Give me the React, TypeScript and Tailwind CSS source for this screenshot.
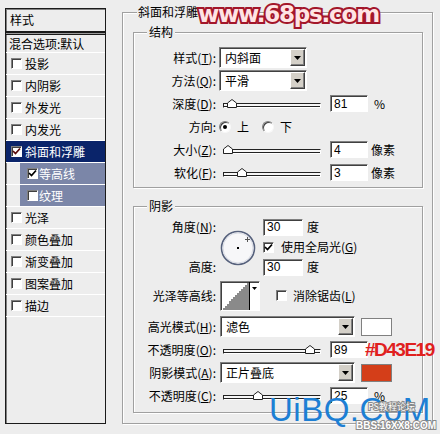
import React from "react";

const sunken =
  "border border-t-[#808080] border-l-[#808080] border-b-white border-r-white shadow-[inset_1px_1px_0_#404040]";
const etched = "border border-[#a0a0a0] shadow-[inset_1px_1px_0_#ffffff,1px_1px_0_#ffffff]";

function U({ c }: { c: string }) {
  return <span className="underline underline-offset-[1px]">{c}</span>;
}

function Label({ t, k }: { t: string; k?: string }) {
  return (
    <div className="w-[82px] shrink-0 text-right whitespace-nowrap">
      {t}
      {k ? (
        <>
          (<U c={k} />)
        </>
      ) : null}
      :
    </div>
  );
}

function CheckBox({ checked, color = "#000" }: { checked?: boolean; color?: string }) {
  return (
    <span className={`relative inline-block w-[11px] h-[11px] shrink-0 bg-white ${sunken}`}>
      {checked && (
        <svg className="absolute left-0 top-0" width="9" height="9" viewBox="0 0 9 9">
          <path d="M1 4 L3.5 6.5 L8 1.5" stroke={color} strokeWidth="1.7" fill="none" />
        </svg>
      )}
    </span>
  );
}

function Radio({ on }: { on?: boolean }) {
  return (
    <span className="w-[12px] h-[12px] shrink-0 rounded-full bg-white border border-t-[#808080] border-l-[#808080] border-b-[#f8f8f8] border-r-[#f8f8f8] shadow-[inset_1px_1px_0_#404040] flex items-center justify-center">
      {on && <span className="w-[4px] h-[4px] rounded-full bg-black" />}
    </span>
  );
}

function Slider({ pos }: { pos: number }) {
  return (
    <div className="relative ml-[4px] w-[98px] h-[9px] flex items-end shrink-0">
      <div className="w-full h-[5px] border border-[#222] border-b-[#ffffff] border-r-[#ffffff] bg-[#f6f6f6] shadow-[inset_0_-1px_0_#222]" />
      <svg className="absolute top-0" style={{ left: pos }} width="10" height="9" viewBox="0 0 10 9">
        <path d="M0.5 8.5 V4 L5 0.5 L9.5 4 V8.5 Z" fill="#ffffff" stroke="#222" />
      </svg>
    </div>
  );
}

function Field({ v, cls }: { v: string; cls: string }) {
  return (
    <div className={`${cls} h-[17px] shrink-0 bg-white ${sunken} pl-[3px] flex items-center font-['Liberation_Sans',sans-serif]`}>
      {v}
    </div>
  );
}

function Select({ v, w }: { v: string; w: string }) {
  return (
    <div className={`${w} h-[21px] shrink-0 bg-white ${sunken} flex items-center justify-between`}>
      <span className="pl-[5px]">{v}</span>
      <span className="w-[15px] h-[17px] mr-[1px] bg-[#d4d0c8] border border-t-white border-l-white border-b-[#404040] border-r-[#404040] shadow-[inset_-1px_-1px_0_#808080] flex items-center justify-center">
        <svg width="7" height="4" viewBox="0 0 7 4">
          <path d="M0 0H7L3.5 4Z" fill="#000" />
        </svg>
      </span>
    </div>
  );
}

function Row({ label, k, children, cls = "" }: { label: string; k?: string; children: React.ReactNode; cls?: string }) {
  return (
    <div className={`flex items-center h-[23px] ${cls}`}>
      <Label t={label} k={k} />
      <div className="ml-[3px] flex items-center">{children}</div>
    </div>
  );
}

type Item = { t: string; checked?: boolean; sel?: boolean; sub?: boolean };
const items: Item[] = [
  { t: "投影" },
  { t: "内阴影" },
  { t: "外发光" },
  { t: "内发光" },
  { t: "斜面和浮雕", checked: true, sel: true },
  { t: "等高线", checked: true, sub: true },
  { t: "纹理", sub: true },
  { t: "光泽" },
  { t: "颜色叠加" },
  { t: "渐变叠加" },
  { t: "图案叠加" },
  { t: "描边" },
];

function Dial() {
  return (
    <svg className="ml-[4px] mt-[12px] shrink-0" width="36" height="36" viewBox="0 0 36 36">
      <circle cx="18" cy="18" r="16.5" fill="#f7f7f9" stroke="#56617c" strokeWidth="1.6" />
      <circle cx="18" cy="18" r="15" fill="none" stroke="#d8dbe4" strokeWidth="1" />
      <rect x="17" y="17" width="2" height="2" fill="#000" />
      <path d="M27.5 7 V12 M25 9.5 H30" stroke="#555" strokeWidth="1" />
    </svg>
  );
}

function Contour() {
  return (
    <div className={`ml-[4px] w-[40px] h-[30px] shrink-0 bg-white ${sunken} flex`}>
      <svg width="28" height="28" viewBox="0 0 28 28" className="shrink-0">
        <path
          d="M2 28 V26 H4 V24 H6 V22 H8 V19 H10 V17 H12 V15 H14 V13 H16 V11 H18 V9 H20 V7 H22 V5 H24 V3 H26 V1 H28 V28 Z"
          fill="#8a8a8a"
        />
      </svg>
      <div className="w-[1px] h-full bg-black" />
      <div className="flex-1 flex items-start justify-center pt-[5px]">
        <svg width="5" height="3" viewBox="0 0 5 3">
          <path d="M0 0H5L2.5 3Z" fill="#000" />
        </svg>
      </div>
    </div>
  );
}

export default function App() {
  return (
    <div className="relative w-[440px] h-[434px] overflow-hidden bg-[#ededed] text-black text-[12px] leading-[14px] font-['Noto_Sans_CJK_SC','Noto_Sans',sans-serif] flex items-start">
      {/* left list panel */}
      <div className="ml-[5px] mt-[8px] w-[101px] h-[416px] shrink-0 border border-[#1a1a1a] shadow-[inset_1px_1px_0_#808080] flex flex-col">
        <div className="h-[22px] pl-[4px] flex items-center">样式</div>
        <div className="h-[4px] border-t-2 border-b border-[#1a1a1a] bg-[#9a9a9a]" />
        <div className="h-[18px] pl-[3px] flex items-center border-b border-white">混合选项:默认</div>
        {items.map((it) =>
          it.sub ? (
            <div key={it.t} className="h-[22px] border-b border-white flex">
              <div className="ml-[14px] flex-1 bg-[#7b86a8] text-white flex items-center pl-[7px] gap-[1px]">
                <CheckBox checked={it.checked} />
                <span>{it.t}</span>
              </div>
            </div>
          ) : (
            <div
              key={it.t}
              className={`h-[22px] border-b border-white flex items-center pl-[5px] gap-[3px] ${it.sel ? "bg-[#0a246a] text-white" : ""}`}
            >
              <CheckBox checked={it.checked} color="#5a0a0a" />
              <span>{it.t}</span>
            </div>
          )
        )}
      </div>

      {/* right group */}
      <div className={`relative ml-[16px] mt-[12px] w-[311px] h-[412px] shrink-0 ${etched} pt-[19px] pl-[10px] pr-[9px] flex flex-col`}>
        <span className="absolute left-[14px] top-[-8px] px-[1px] bg-[#ededed]">斜面和浮雕</span>

        {/* 结构 */}
        <div className={`relative h-[156px] ${etched} pt-[13px] flex flex-col`}>
          <span className="absolute left-[13px] top-[-8px] px-[2px] bg-[#ededed]">结构</span>
          <Row label="样式" k="T">
            <Select v="内斜面" w="w-[88px]" />
          </Row>
          <Row label="方法" k="Q">
            <Select v="平滑" w="w-[88px]" />
          </Row>
          <Row label="深度" k="D">
            <Slider pos={4} />
            <Field v="81" cls="ml-[9px] w-[38px]" />
            <span className="ml-[6px]">%</span>
          </Row>
          <Row label="方向">
            <Radio on />
            <span className="ml-[6px]">上</span>
            <span className="ml-[13px]">
              <Radio />
            </span>
            <span className="ml-[6px]">下</span>
          </Row>
          <Row label="大小" k="Z">
            <Slider pos={0} />
            <Field v="4" cls="ml-[9px] w-[38px]" />
            <span className="ml-[3px]">像素</span>
          </Row>
          <Row label="软化" k="F">
            <Slider pos={14} />
            <Field v="3" cls="ml-[9px] w-[38px]" />
            <span className="ml-[3px]">像素</span>
          </Row>
        </div>

        {/* 阴影 */}
        <div className={`relative mt-[18px] h-[207px] ${etched} pt-[11px] flex flex-col`}>
          <span className="absolute left-[13px] top-[-8px] px-[2px] bg-[#ededed]">阴影</span>

          <div className="flex h-[58px]">
            <div className="w-[82px] shrink-0 flex flex-col justify-between">
              <div className="h-[18px] flex items-center justify-end whitespace-nowrap">
                角度(<U c="N" />):
              </div>
              <div className="h-[18px] flex items-center justify-end">高度:</div>
            </div>
            <Dial />
            <div className="ml-[7px] flex flex-col">
              <div className="h-[18px] flex items-center">
                <Field v="30" cls="w-[40px]" />
                <span className="ml-[4px]">度</span>
              </div>
              <div className="h-[22px] flex items-center gap-[7px]">
                <CheckBox checked />
                <span>
                  使用全局光(<U c="G" />)
                </span>
              </div>
              <div className="h-[18px] flex items-center">
                <Field v="30" cls="w-[40px]" />
                <span className="ml-[4px]">度</span>
              </div>
            </div>
          </div>

          <div className="mt-[5px] flex items-center h-[30px]">
            <Label t="光泽等高线" />
            <Contour />
            <span className="ml-[16px]">
              <CheckBox />
            </span>
            <span className="ml-[6px]">
              消除锯齿(<U c="L" />)
            </span>
          </div>

          <Row label="高光模式" k="H" cls="mt-[4px]">
            <span className="ml-[1px]">
              <Select v="滤色" w="w-[135px]" />
            </span>
            <span className="ml-[6px] w-[31px] h-[18px] bg-white border border-[#808080]" />
          </Row>
          <Row label="不透明度" k="O">
            <Slider pos={82} />
            <Field v="89" cls="ml-[9px] w-[38px]" />
          </Row>
          <Row label="阴影模式" k="A">
            <span className="ml-[1px]">
              <Select v="正片叠底" w="w-[135px]" />
            </span>
            <span className="ml-[6px] w-[31px] h-[18px] bg-[#d43e19] border border-[#808080]" />
          </Row>
          <Row label="不透明度" k="C">
            <Slider pos={30} />
            <Field v="25" cls="ml-[9px] w-[38px]" />
            <span className="ml-[6px]">%</span>
          </Row>
        </div>
      </div>

      {/* watermarks */}
      <div className="absolute left-[198px] top-[2px] text-[23px] leading-[24px] font-bold tracking-[-1.2px] font-['DejaVu_Sans',sans-serif] text-[#ffe4e4] [-webkit-text-stroke:4px_#a3162a] [paint-order:stroke_fill]">
        www.68ps.com
      </div>
      <div className="absolute left-[365px] top-[339px] text-[19px] leading-[22px] font-bold tracking-[-1.5px] font-['Liberation_Sans',sans-serif] text-[#e0201e]">
        #D43E19
      </div>
      <div className="absolute left-[269px] top-[393px] text-[33px] leading-[33px] tracking-[0.5px] font-['Liberation_Sans',sans-serif] text-[#1d7fd4]">
        UiBQ.CoM
      </div>
      <div className="absolute left-[368px] top-[401px] text-[9px] leading-[11px] font-['Noto_Sans_CJK_SC',sans-serif] text-white [-webkit-text-stroke:2px_#8a8a8a] [paint-order:stroke_fill]">
        PS教程论坛
      </div>
      <div className="absolute left-[356px] top-[420px] text-[10px] leading-[12px] font-bold font-['Liberation_Sans',sans-serif] text-white [-webkit-text-stroke:2px_#8a8a8a] [paint-order:stroke_fill]">
        BBS.16XX8.COM
      </div>
    </div>
  );
}
